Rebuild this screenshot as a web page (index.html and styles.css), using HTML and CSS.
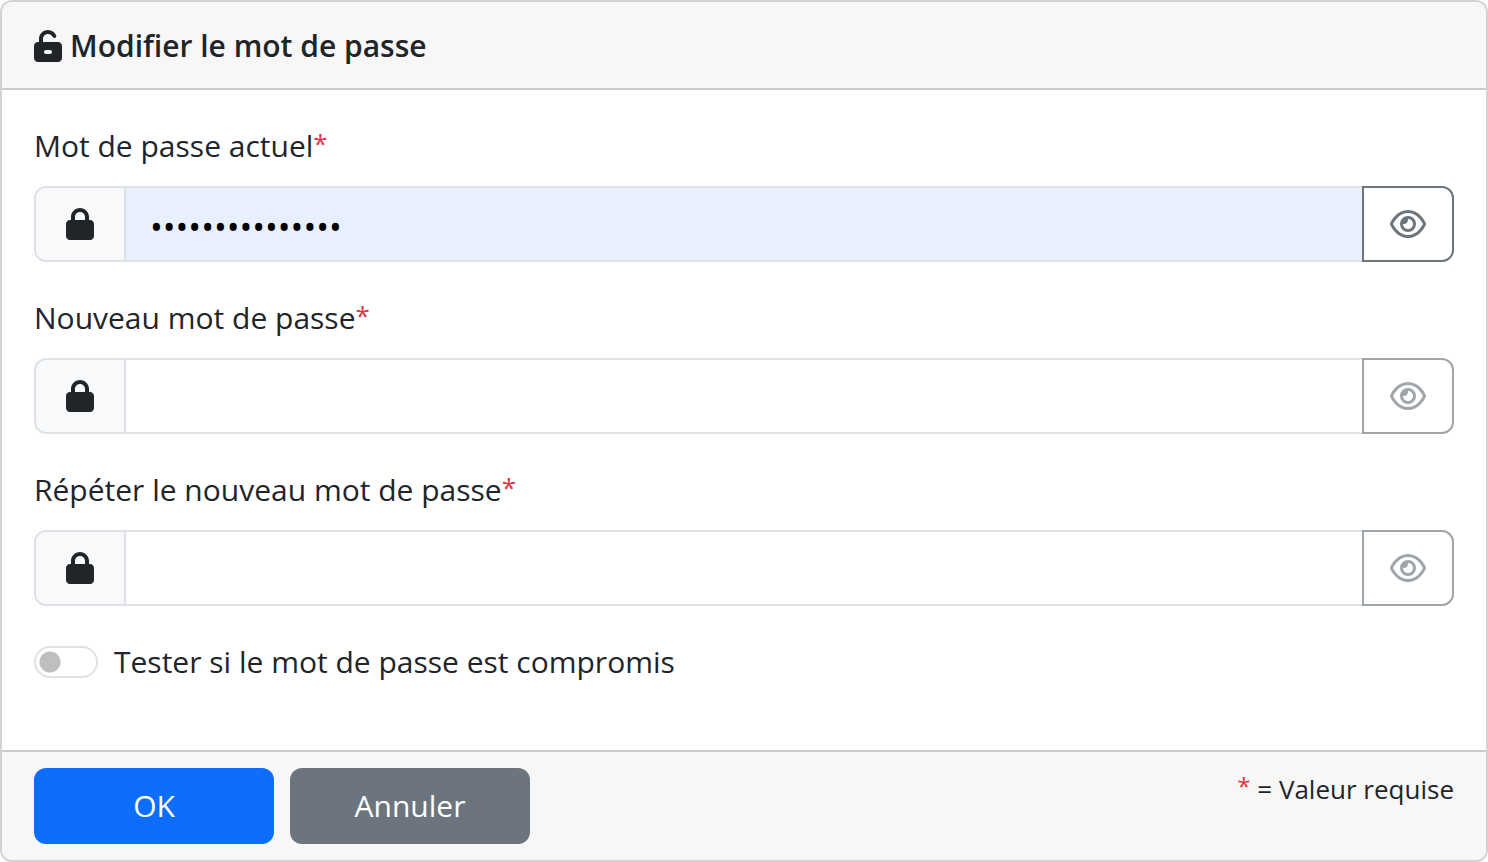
FILE: index.html
```html
<!DOCTYPE html>
<html lang="fr">
<head>
<meta charset="utf-8">
<meta name="viewport" content="width=device-width, initial-scale=1">
<title>Modifier le mot de passe</title>
<link rel="stylesheet" href="styles.css">
</head>
<body>
<svg class="sprite" aria-hidden="true">
  <symbol id="lock" viewBox="0 0 448 512"><path d="M144 144v48H304V144c0-44.200-35.800-80-80-80s-80 35.800-80 80zM80 192V144C80 64.500 144.500 0 224 0s144 64.500 144 144v48h16c35.300 0 64 28.300 64 64V448c0 35.300-28.300 64-64 64H64c-35.300 0-64-28.300-64-64V256c0-35.300 28.300-64 64-64H80z"/></symbol>
  <symbol id="unlock" viewBox="0 0 448 512"><path fill-rule="evenodd" d="M144 144c0-44.200 35.800-80 80-80c31.900 0 59.400 18.600 72.300 45.700c7.600 16 26.700 22.800 42.600 15.200s22.800-26.700 15.200-42.600C331 33.700 281.500 0 224 0C144.500 0 80 64.500 80 144v48H64c-35.300 0-64 28.300-64 64V448c0 35.300 28.300 64 64 64H384c35.300 0 64-28.300 64-64V256c0-35.300-28.300-64-64-64H144V144zM256 384c17.700 0 32-14.300 32-32s-14.300-32-32-32H192c-17.700 0-32 14.300-32 32s14.300 32 32 32h64z"/></symbol>
  <symbol id="eye" viewBox="0 0 576 512"><path d="M288 80c-65.200 0-118.800 29.600-159.900 67.700C89.600 183.500 63 226 49.400 256c13.600 30 40.200 72.500 78.600 108.300C169.200 402.400 222.800 432 288 432s118.800-29.600 159.900-67.700C486.400 328.500 513 286 526.600 256c-13.600-30-40.200-72.500-78.600-108.300C406.800 109.600 353.200 80 288 80zM95.400 112.600C142.500 68.800 207.200 32 288 32s145.500 36.800 192.600 80.600c46.800 43.500 78.100 95.400 93 131.100c3.300 7.900 3.300 16.700 0 24.600c-14.900 35.700-46.200 87.700-93 131.100C433.500 443.200 368.800 480 288 480s-145.500-36.800-192.600-80.600C48.600 356 17.300 304 2.500 268.300c-3.300-7.900-3.300-16.700 0-24.600C17.300 208 48.600 156 95.400 112.600zM288 336c44.200 0 80-35.800 80-80s-35.800-80-80-80c-.7 0-1.300 0-2 0c1.300 5.100 2 10.500 2 16c0 35.300-28.700 64-64 64c-5.500 0-10.900-.7-16-2c0 .7 0 1.300 0 2c0 44.200 35.800 80 80 80zm0-208a128 128 0 1 1 0 256 128 128 0 1 1 0-256z"/></symbol>
</svg>
<form class="card">
  <header class="card-header">
    <svg class="icon-lock" aria-hidden="true"><use href="#unlock"/></svg>
    <h1 class="title">Modifier le mot de passe</h1>
  </header>
  <div class="card-body">
    <div class="field">
      <label class="label" for="current">Mot de passe actuel<span class="required">*</span></label>
      <div class="input-group">
        <span class="addon"><svg class="icon-lock" aria-hidden="true"><use href="#lock"/></svg></span>
        <input class="input filled" id="current" type="password" value="motdepasse12345" required>
        <button class="reveal" type="button" aria-label="Afficher le mot de passe"><svg class="icon-eye" aria-hidden="true"><use href="#eye"/></svg></button>
      </div>
    </div>
    <div class="field">
      <label class="label" for="new">Nouveau mot de passe<span class="required">*</span></label>
      <div class="input-group">
        <span class="addon"><svg class="icon-lock" aria-hidden="true"><use href="#lock"/></svg></span>
        <input class="input" id="new" type="password" required>
        <button class="reveal" type="button" aria-label="Afficher le mot de passe" disabled><svg class="icon-eye" aria-hidden="true"><use href="#eye"/></svg></button>
      </div>
    </div>
    <div class="field">
      <label class="label" for="repeat">Répéter le nouveau mot de passe<span class="required">*</span></label>
      <div class="input-group">
        <span class="addon"><svg class="icon-lock" aria-hidden="true"><use href="#lock"/></svg></span>
        <input class="input" id="repeat" type="password" required>
        <button class="reveal" type="button" aria-label="Afficher le mot de passe" disabled><svg class="icon-eye" aria-hidden="true"><use href="#eye"/></svg></button>
      </div>
    </div>
    <div class="check">
      <input class="switch" id="compromised" type="checkbox" role="switch">
      <label for="compromised">Tester si le mot de passe est compromis</label>
    </div>
  </div>
  <footer class="card-footer">
    <button class="btn primary" type="submit">OK</button>
    <button class="btn secondary" type="button">Annuler</button>
    <p class="note"><span class="required">*</span> = Valeur requise</p>
  </footer>
</form>
</body>
</html>
```
FILE: styles.css
```css
* {
  box-sizing: border-box;
}

body {
  margin: 0;
  background: #fff;
  color: #212529;
  font-family: "Segoe UI", "Open Sans", sans-serif;
  font-size: 30px;
  line-height: 48px;
}

.sprite {
  display: none;
}

.card {
  border: 2px solid #d2d2d2;
  border-radius: 12px;
  overflow: hidden;
}

.card-header {
  display: flex;
  align-items: center;
  gap: 8px;
  padding: 20px 32px 18px;
  background: #f7f7f7;
  border-bottom: 2px solid #cbcbcb;
}

.title {
  margin: 0;
  font-size: 30px;
  font-weight: 600;
}

.icon-lock {
  flex: none;
  width: 28px;
  height: 32px;
  fill: currentColor;
}

.icon-eye {
  width: 36px;
  height: 32px;
  fill: currentColor;
}

.card-body {
  display: flex;
  flex-direction: column;
  gap: 32px;
  padding: 32px 32px 64px;
}

.field {
  display: flex;
  flex-direction: column;
  gap: 16px;
}

.required {
  color: #dc3545;
  font-size: 26px;
  line-height: 1;
  vertical-align: 4px;
}

.input-group {
  display: flex;
  height: 76px;
}

.addon {
  display: flex;
  align-items: center;
  justify-content: center;
  width: 92px;
  background: #f8f9fa;
  border: 2px solid #dee2e6;
  border-radius: 12px 0 0 12px;
}

.input {
  flex: 1;
  min-width: 0;
  margin: 0 -2px;
  padding: 16px 24px 10px;
  background: #fff;
  border: 2px solid #dee2e6;
  border-radius: 0;
  color: #000;
  font: inherit;
  font-size: 34px;
}

.input.filled {
  background: #e8f0fe;
}

.reveal {
  display: flex;
  align-items: center;
  justify-content: center;
  width: 92px;
  padding: 0;
  background: #fff;
  border: 2px solid #6c757d;
  border-radius: 0 12px 12px 0;
  color: #6c757d;
  z-index: 1;
}

.reveal:disabled {
  border-color: #a0a5aa;
  color: #a0a5aa;
}

.check {
  display: flex;
  align-items: center;
  gap: 16px;
}

.switch {
  appearance: none;
  width: 64px;
  height: 32px;
  margin: 0;
  border: 2px solid #dee2e6;
  border-radius: 16px;
  background: radial-gradient(circle at 14px 14px, #bfbfbf 10px, #fff 11px);
}

.card-footer {
  display: flex;
  gap: 16px;
  padding: 16px 32px;
  background: #f7f7f7;
  border-top: 2px solid #cbcbcb;
}

.btn {
  width: 240px;
  height: 76px;
  padding: 0;
  border: 0;
  border-radius: 12px;
  color: #fff;
  font: inherit;
}

.primary {
  background: #0d6efd;
}

.secondary {
  background: #6c757d;
}

.note {
  margin: 0 0 0 auto;
  font-size: 26px;
  line-height: 42px;
}

.note .required {
  font-size: 24px;
}
```
